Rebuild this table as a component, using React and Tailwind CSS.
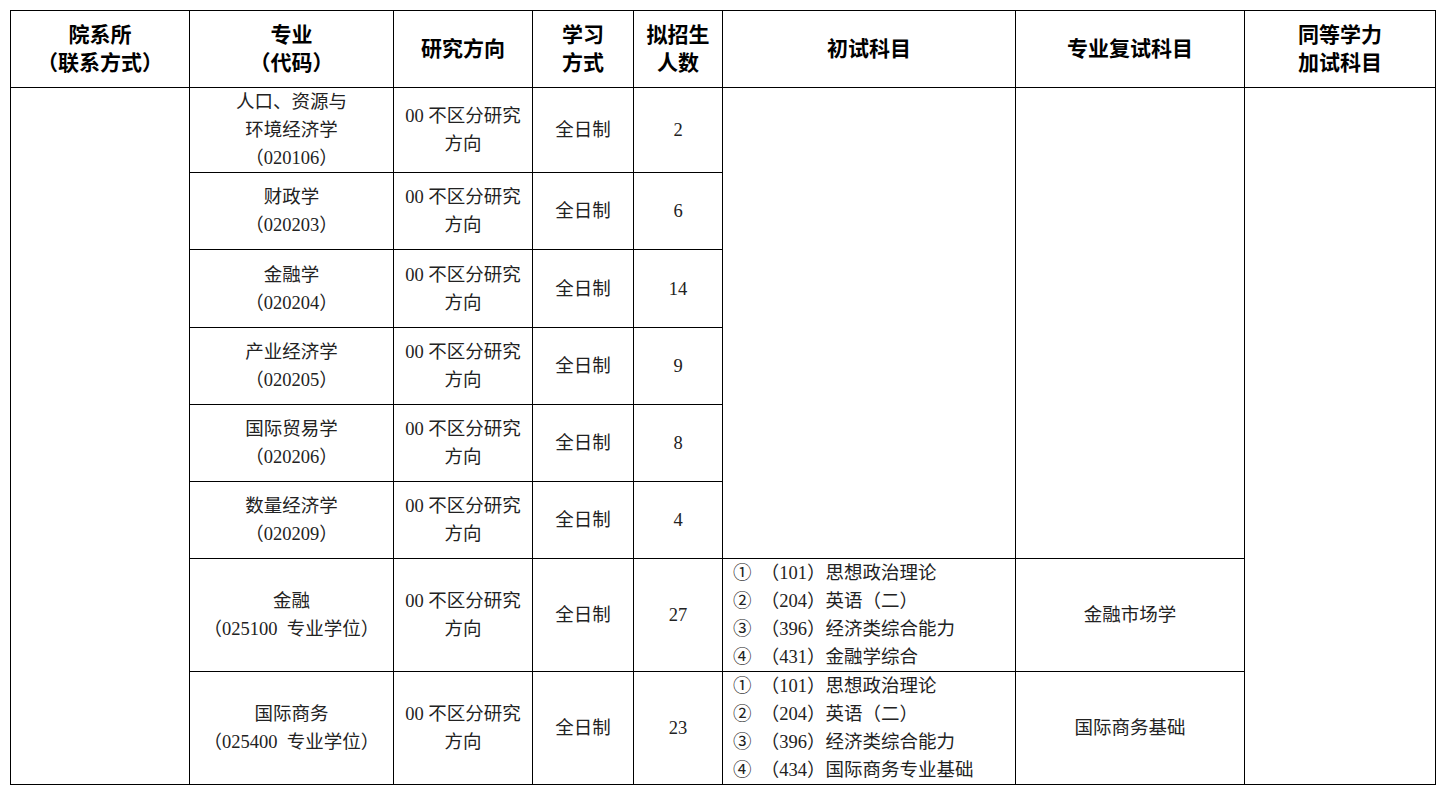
const rows = [
  { name: ["人口、资源与", "环境经济学", "（020106）"], count: "2", h: "h-[85px]" },
  { name: ["财政学", "（020203）"], count: "6", h: "h-[77px]" },
  { name: ["金融学", "（020204）"], count: "14", h: "h-[78px]" },
  { name: ["产业经济学", "（020205）"], count: "9", h: "h-[77px]" },
  { name: ["国际贸易学", "（020206）"], count: "8", h: "h-[77px]" },
  { name: ["数量经济学", "（020209）"], count: "4", h: "h-[77px]" },
];

const proRows = [
  {
    name: ["金融", "（025100  专业学位）"],
    count: "27",
    exams: ["①  （101）思想政治理论", "②  （204）英语（二）", "③  （396）经济类综合能力", "④  （431）金融学综合"],
    retest: "金融市场学",
  },
  {
    name: ["国际商务", "（025400  专业学位）"],
    count: "23",
    exams: ["①  （101）思想政治理论", "②  （204）英语（二）", "③  （396）经济类综合能力", "④  （434）国际商务专业基础"],
    retest: "国际商务基础",
  },
];

const th = "border border-black font-bold text-[21px] leading-[28px] text-black text-center align-middle";
const td = "border border-black text-center align-middle";

function Lines({ items }) {
  return items.map((t, i) => (
    <div key={i} className="whitespace-pre">
      {t}
    </div>
  ));
}

export default function App() {
  return (
    <div className="min-h-screen bg-white pt-[10px] pl-[10px]">
      <table
        className="border-collapse table-fixed w-[1425px] text-[18.5px] leading-[28px] text-[#222]"
        style={{ fontFamily: '"Liberation Serif", "Noto Sans CJK SC", serif' }}
      >
        <colgroup>
          <col className="w-[179px]" />
          <col className="w-[204px]" />
          <col className="w-[139px]" />
          <col className="w-[101px]" />
          <col className="w-[89px]" />
          <col className="w-[293px]" />
          <col className="w-[229px]" />
          <col className="w-[191px]" />
        </colgroup>
        <thead style={{ fontFamily: '"Liberation Sans", "Noto Sans CJK SC", sans-serif' }}>
          <tr className="h-[77px]">
            <th className={th}>院系所<br />（联系方式）</th>
            <th className={th}>专业<br />（代码）</th>
            <th className={th}>研究方向</th>
            <th className={th}>学习<br />方式</th>
            <th className={th}>拟招生<br />人数</th>
            <th className={th}>初试科目</th>
            <th className={th}>专业复试科目</th>
            <th className={th}>同等学力<br />加试科目</th>
          </tr>
        </thead>
        <tbody>
          {rows.map((r, i) => (
            <tr key={i} className={r.h}>
              {i === 0 && <td className={td} rowSpan={8}></td>}
              <td className={td}><Lines items={r.name} /></td>
              <td className={td}>00 不区分研究<br />方向</td>
              <td className={td}>全日制</td>
              <td className={td}>{r.count}</td>
              {i === 0 && <td className={td} rowSpan={6}></td>}
              {i === 0 && <td className={td} rowSpan={6}></td>}
              {i === 0 && <td className={td} rowSpan={8}></td>}
            </tr>
          ))}
          {proRows.map((r, i) => (
            <tr key={i} className="h-[113px]">
              <td className={td}><Lines items={r.name} /></td>
              <td className={td}>00 不区分研究<br />方向</td>
              <td className={td}>全日制</td>
              <td className={td}>{r.count}</td>
              <td className="border border-black text-left align-middle pl-[10px]">
                <Lines items={r.exams} />
              </td>
              <td className={td}>{r.retest}</td>
            </tr>
          ))}
        </tbody>
      </table>
    </div>
  );
}
